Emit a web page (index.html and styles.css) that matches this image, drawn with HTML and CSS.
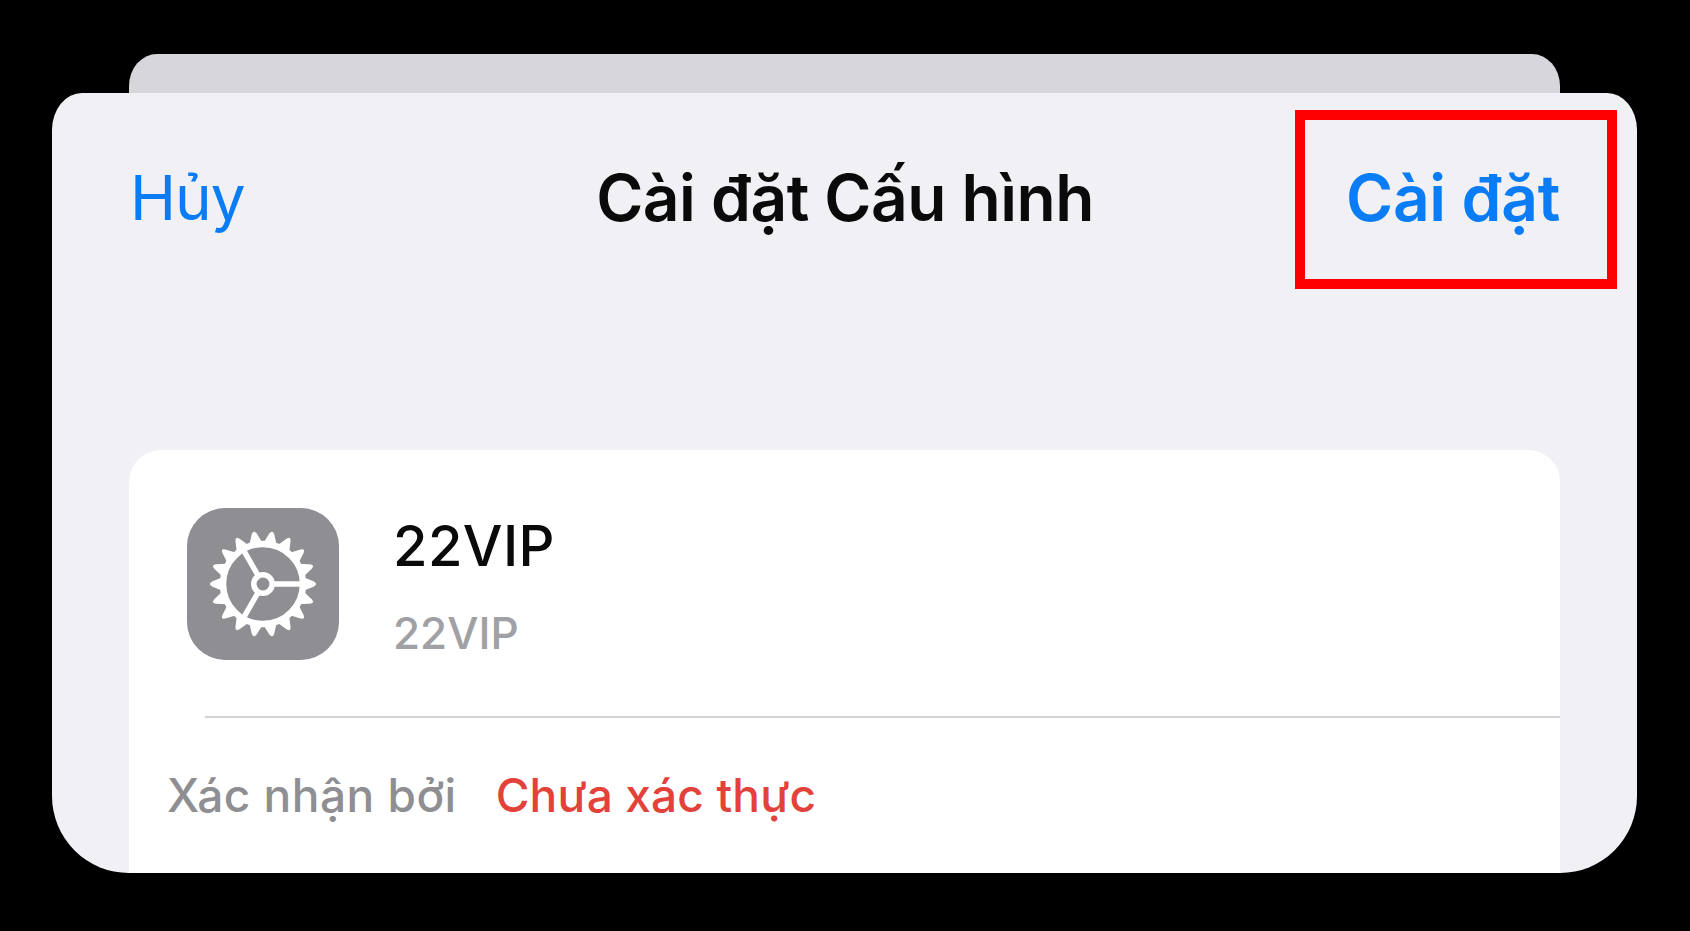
FILE: index.html
```html
<!DOCTYPE html>
<html lang="vi">
  <head>
    <meta charset="UTF-8" />
    <meta name="viewport" content="width=device-width, initial-scale=1.0" />
    <title>Cài đặt Cấu hình</title>
    <link rel="stylesheet" href="styles.css">
  </head>
  <body>
    <div class="sheet-back"></div>
    <div class="sheet">
      <div class="nav">
        <span class="nav-cancel">Hủy</span>
        <span class="nav-title">Cài đặt Cấu hình</span>
        <span class="nav-install">Cài đặt</span>
      </div>
      <!-- Red box drawn over the screenshot -->
      <div class="highlight"></div>

      <div class="card">
        <div class="profile">
          <div class="profile-icon">
            <svg class="gear" viewBox="-76 -76 152 152" aria-hidden="true">
              <defs>
                <polygon id="tooth" points="40,-7 51,-2.4 53,-0.8 53,0.8 51,2.4 40,7" />
              </defs>
              <g fill="#fff">
                <use href="#tooth" />
                <use href="#tooth" transform="rotate(20)" />
                <use href="#tooth" transform="rotate(40)" />
                <use href="#tooth" transform="rotate(60)" />
                <use href="#tooth" transform="rotate(80)" />
                <use href="#tooth" transform="rotate(100)" />
                <use href="#tooth" transform="rotate(120)" />
                <use href="#tooth" transform="rotate(140)" />
                <use href="#tooth" transform="rotate(160)" />
                <use href="#tooth" transform="rotate(180)" />
                <use href="#tooth" transform="rotate(200)" />
                <use href="#tooth" transform="rotate(220)" />
                <use href="#tooth" transform="rotate(240)" />
                <use href="#tooth" transform="rotate(260)" />
                <use href="#tooth" transform="rotate(280)" />
                <use href="#tooth" transform="rotate(300)" />
                <use href="#tooth" transform="rotate(320)" />
                <use href="#tooth" transform="rotate(340)" />
              </g>
              <g fill="none" stroke="#fff">
                <circle r="40" stroke-width="6.5" />
                <circle r="9.2" stroke-width="5.5" />
                <path stroke-width="5.5" d="M11 0H39M-5.5 -9.5L-19.5 -33.8M-5.5 9.5L-19.5 33.8" />
              </g>
            </svg>
          </div>
          <div class="profile-text">
            <div class="profile-name">22VIP</div>
            <div class="profile-sub">22VIP</div>
          </div>
        </div>
        <div class="verify">
          <span class="verify-label">Xác nhận bởi</span>
          <span class="verify-value">Chưa xác thực</span>
        </div>
      </div>
    </div>
  </body>
</html>
```

FILE: styles.css
```css
html,
body {
  height: 100%;
}
body {
  margin: 0;
  padding-top: 54px;
  box-sizing: border-box;
  background-color: #000;
  font-family: "Inter", "Noto Sans", sans-serif;
  overflow: hidden;
}
.sheet-back {
  height: 39px;
  margin: 0 130px 0 129px;
  background-color: #d6d6db;
  border-radius: 28px 28px 0 0 / 32px 32px 0 0;
}
.sheet {
  position: relative;
  height: 780px;
  margin: 0 53px 0 52px;
  background-color: #f0f0f5;
  border-radius: 30px 30px 77px 77px / 37px 37px 77px 77px;
  overflow: hidden;
}
.nav {
  display: grid;
  grid-template-columns: 1fr auto 1fr;
  align-items: center;
  height: 80px;
  padding: 65px 77px 0 78px;
  font-size: 64px;
  line-height: 80px;
}
.nav-cancel {
  color: #0a7cf5;
  font-size: 62px;
  font-weight: 400;
  letter-spacing: -1px;
}
.nav-title {
  color: #0a0a0a;
  font-weight: 600;
  letter-spacing: -0.5px;
}
.nav-install {
  color: #0a7cf5;
  font-weight: 600;
  letter-spacing: -0.3px;
  text-align: right;
}
.highlight {
  position: absolute;
  top: 17px;
  right: 20px;
  width: 302px;
  height: 159px;
  border: 10px solid #fe0000;
}
.card {
  height: 423px;
  margin: 212px 77px 0;
  background-color: #fff;
  border-radius: 32px 32px 0 0;
}
.profile {
  display: flex;
  gap: 54px;
  height: 268px;
  margin-left: 76px;
  padding-top: 58px;
  box-sizing: border-box;
  border-bottom: 2px solid #d2d2d6;
}
.profile-icon {
  flex: none;
  width: 152px;
  height: 152px;
  margin-left: -18px;
  background-color: #8e8e93;
  border-radius: 38px;
}
.gear {
  display: block;
  width: 152px;
  height: 152px;
}
.profile-name {
  margin-top: 4px;
  color: #0a0a0a;
  font-size: 56px;
  font-weight: 500;
  letter-spacing: 0.4px;
  line-height: 68px;
}
.profile-sub {
  margin-top: 26px;
  color: #a0a0a5;
  font-size: 44px;
  font-weight: 500;
  line-height: 54px;
}
.verify {
  display: flex;
  gap: 39px;
  padding: 45px 0 0 38px;
  font-size: 46px;
  font-weight: 500;
  line-height: 64px;
}
.verify-label {
  color: #8e8e93;
  letter-spacing: 0.5px;
}
.verify-value {
  color: #e2423a;
  letter-spacing: 0.15px;
}
```
